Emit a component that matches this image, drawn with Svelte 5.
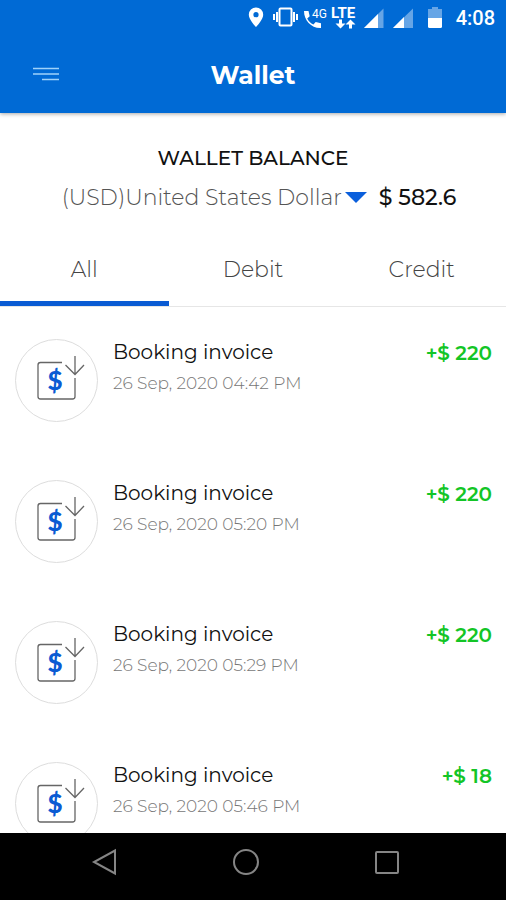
<script lang="ts">
  type Filter = 'all' | 'debit' | 'credit';

  interface Transaction {
    id: number;
    title: string;
    date: string;
    amount: number;
  }

  const tabs: { key: Filter; label: string }[] = [
    { key: 'all', label: 'All' },
    { key: 'debit', label: 'Debit' },
    { key: 'credit', label: 'Credit' },
  ];

  const transactions: Transaction[] = [
    { id: 1, title: 'Booking invoice', date: '26 Sep, 2020 04:42 PM', amount: 220 },
    { id: 2, title: 'Booking invoice', date: '26 Sep, 2020 05:20 PM', amount: 220 },
    { id: 3, title: 'Booking invoice', date: '26 Sep, 2020 05:29 PM', amount: 220 },
    { id: 4, title: 'Booking invoice', date: '26 Sep, 2020 05:46 PM', amount: 18 },
  ];

  let active = $state<Filter>('all');
  let currency = $state('USD');

  let visible = $derived(
    transactions.filter((t) => active === 'all' || (active === 'credit' ? t.amount > 0 : t.amount < 0))
  );
</script>

<div class="screen">
  <header class="top">
    <div class="status">
      <svg width="20" height="24" viewBox="0 0 20 24" fill="#fff">
        <path fill-rule="evenodd" d="M10 1.500a7.200 7.200 0 0 0-7.200 7.200c0 5 7.200 12.300 7.200 12.300s7.200-7.300 7.200-12.300a7.200 7.200 0 0 0-7.200-7.200zm0 4.600a2.600 2.600 0 1 1 0 5.200 2.600 2.600 0 0 1 0-5.200z" />
      </svg>
      <svg width="30" height="24" viewBox="0 0 30 24" fill="none" stroke="#fff" stroke-width="2">
        <rect x="9.500" y="2.500" width="12" height="17" rx="1" />
        <path d="M7 6v10M24 6v10M4 8v6M27 8v6" />
      </svg>
      <svg class="call" width="22" height="24" viewBox="0 0 22 24" fill="#fff">
        <path d="M0 5h4.500l1.200 5.200-2.500 2.200c1.400 2.800 3.400 4.700 6.200 6l2.300-2.500 5.300 1.300v4.800C7.500 22.500 0 14.500 0 5z" />
        <text class="net" x="8" y="12">4G</text>
      </svg>
      <svg class="data" width="28" height="24" viewBox="0 0 28 24" fill="#fff">
        <text class="lte" x="1" y="12">LTE</text>
        <path d="M9 13.500h3v4h3.500l-5 5-5-5H9zM19 22.500h3v-4h3.500l-5-5-5 5H19z" />
      </svg>
      <svg width="22" height="24" viewBox="0 0 22 24" fill="#fff">
        <path opacity=".4" d="M21.500 2.500V22H2z" />
        <path d="M16 8v14H2z" />
      </svg>
      <svg width="30" height="24" viewBox="0 0 30 24" fill="#fff">
        <path opacity=".4" d="M25 2.500V22H5z" />
        <path d="M16 11v11H5z" />
      </svg>
      <svg width="26" height="24" viewBox="0 0 26 24" fill="#fff">
        <path opacity=".4" d="M10 1h6v2h4v9H6V3h4z" />
        <path d="M6 12h14v8.500a1.500 1.500 0 0 1-1.500 1.500h-11A1.500 1.500 0 0 1 6 20.500z" />
      </svg>
      <time>4:08</time>
    </div>
    <div class="bar">
      <button class="menu" aria-label="Menu">
        <svg width="28" height="16" viewBox="0 0 28 16" fill="none" stroke="#9fd2fa" stroke-width="1.700">
          <path d="M0 1.500h26M0 7h26M9 12.500h17" />
        </svg>
      </button>
      <h1>Wallet</h1>
    </div>
  </header>

  <section class="balance">
    <h2>WALLET BALANCE</h2>
    <div class="balance-row">
      <label class="currency">
        <select bind:value={currency} aria-label="Currency">
          <option value="USD">(USD)United States Dollar</option>
        </select>
        <svg width="22" height="12" viewBox="0 0 22 12"><path d="M0 0h22L11 11z" fill="#0a5fdc" /></svg>
      </label>
      <span class="total">$ 582.6</span>
    </div>
  </section>

  <nav class="tabs">
    {#each tabs as tab (tab.key)}
      <button class:active={active === tab.key} onclick={() => (active = tab.key)}>{tab.label}</button>
    {/each}
  </nav>

  <ul class="list">
    {#each visible as t (t.id)}
      <li>
        <span class="badge">
          <svg width="50" height="50" viewBox="0 0 50 50" fill="none" stroke="#666" stroke-width="1.300">
            <path d="M27 8.500H5.500A2.500 2.500 0 0 0 3 11v31.500A2.500 2.500 0 0 0 5.500 45h32a2.500 2.500 0 0 0 2.500-2.500V24" />
            <path d="M40 2v18M30.500 11L40 20.500 49 11" />
            <text class="dollar" x="20" y="36" text-anchor="middle">$</text>
          </svg>
        </span>
        <div class="info">
          <p class="title">{t.title}</p>
          <p class="date">{t.date}</p>
        </div>
        <span class="amount">+$ {t.amount}</span>
      </li>
    {/each}
  </ul>

  <footer class="system">
    <button aria-label="Back">
      <svg width="28" height="28" viewBox="0 0 28 28"><path d="M24 2.500v23L3 14z" /></svg>
    </button>
    <button aria-label="Home">
      <svg width="28" height="28" viewBox="0 0 28 28"><circle cx="15" cy="14" r="12" /></svg>
    </button>
    <button aria-label="Recent apps">
      <svg width="28" height="28" viewBox="0 0 28 28"><rect x="4" y="4" width="22" height="21" rx="1" /></svg>
    </button>
  </footer>
</div>

<style>
  :global(body) { background: #fff; }
  .screen {
    display: flex;
    flex-direction: column;
    height: 100vh;
    overflow: hidden;
    font-family: Montserrat, Inter, sans-serif;
    color: #111;
  }
  h1, h2, p, ul { margin: 0; padding: 0; }
  button {
    border: 0;
    padding: 0;
    background: none;
    font: inherit;
    color: inherit;
    cursor: pointer;
  }
  svg { display: block; flex: none; }

  .top {
    position: relative;
    flex: none;
    background: #006ad5;
    color: #fff;
    box-shadow: 0 1px 4px rgba(0, 0, 0, 0.35);
  }
  .status {
    display: flex;
    align-items: center;
    justify-content: flex-end;
    gap: 4px;
    height: 36px;
    padding-right: 11px;
  }
  .status time {
    padding-left: 4px;
    font: 500 20px/24px Roboto, sans-serif;
  }
  .call, .data { overflow: visible; }
  .net { font: 400 12px Roboto, sans-serif; }
  .lte { font: 700 15px Roboto, sans-serif; }
  .bar {
    display: grid;
    grid-template-columns: 1fr auto 1fr;
    align-items: center;
    height: 77px;
    padding: 0 33px;
  }
  .menu { justify-self: start; }
  h1 { font-size: 25px; line-height: 32px; font-weight: 700; }

  .balance {
    display: flex;
    flex: none;
    flex-direction: column;
    align-items: center;
    gap: 12px;
    padding: 31px 16px 0;
  }
  h2 { font-size: 20px; line-height: 28px; font-weight: 500; }
  .balance-row {
    display: flex;
    align-items: center;
    gap: 12px;
    padding-left: 12px;
    white-space: nowrap;
  }
  .currency { display: flex; align-items: center; gap: 2px; }
  select {
    appearance: none;
    border: 0;
    margin: 0;
    padding: 0;
    background: none;
    color: #555;
    font: 300 22px/28px Montserrat, Inter, sans-serif;
  }
  .total { font-size: 22px; line-height: 28px; font-weight: 500; }

  .tabs {
    display: grid;
    flex: none;
    grid-template-columns: repeat(3, 1fr);
    margin-top: 26px;
    border-bottom: 1px solid #e6e6e6;
  }
  .tabs button {
    height: 68px;
    border-bottom: 5px solid transparent;
    color: #444;
    font-size: 22px;
    font-weight: 300;
  }
  .tabs .active { border-bottom-color: #0a5bd3; }

  .list {
    display: flex;
    flex: 1;
    flex-direction: column;
    gap: 58px;
    min-height: 0;
    padding: 32px 14px 0 15px;
    overflow: hidden;
    list-style: none;
  }
  li { display: flex; flex: none; align-items: flex-start; }
  .badge {
    display: flex;
    align-items: center;
    justify-content: center;
    box-sizing: border-box;
    width: 83px;
    height: 83px;
    padding: 0 0 4px 6px;
    border: 1px solid #ddd;
    border-radius: 50%;
  }
  .dollar {
    fill: #0a5bd3;
    stroke: none;
    font: 900 26px Lato, sans-serif;
  }
  .info { flex: 1; padding-left: 15px; }
  .title { font-size: 20px; line-height: 26px; font-weight: 400; }
  .date {
    margin-top: 6px;
    color: #777;
    font-size: 17px;
    line-height: 24px;
    font-weight: 300;
  }
  .amount {
    color: #13c526;
    font-size: 20px;
    line-height: 28px;
    font-weight: 600;
  }

  .system {
    display: flex;
    flex: none;
    align-items: flex-start;
    justify-content: space-between;
    box-sizing: border-box;
    height: 67px;
    padding: 15px 21% 0 18%;
    background: #000;
  }
  .system svg { fill: none; stroke: #858585; stroke-width: 2; }
</style>
